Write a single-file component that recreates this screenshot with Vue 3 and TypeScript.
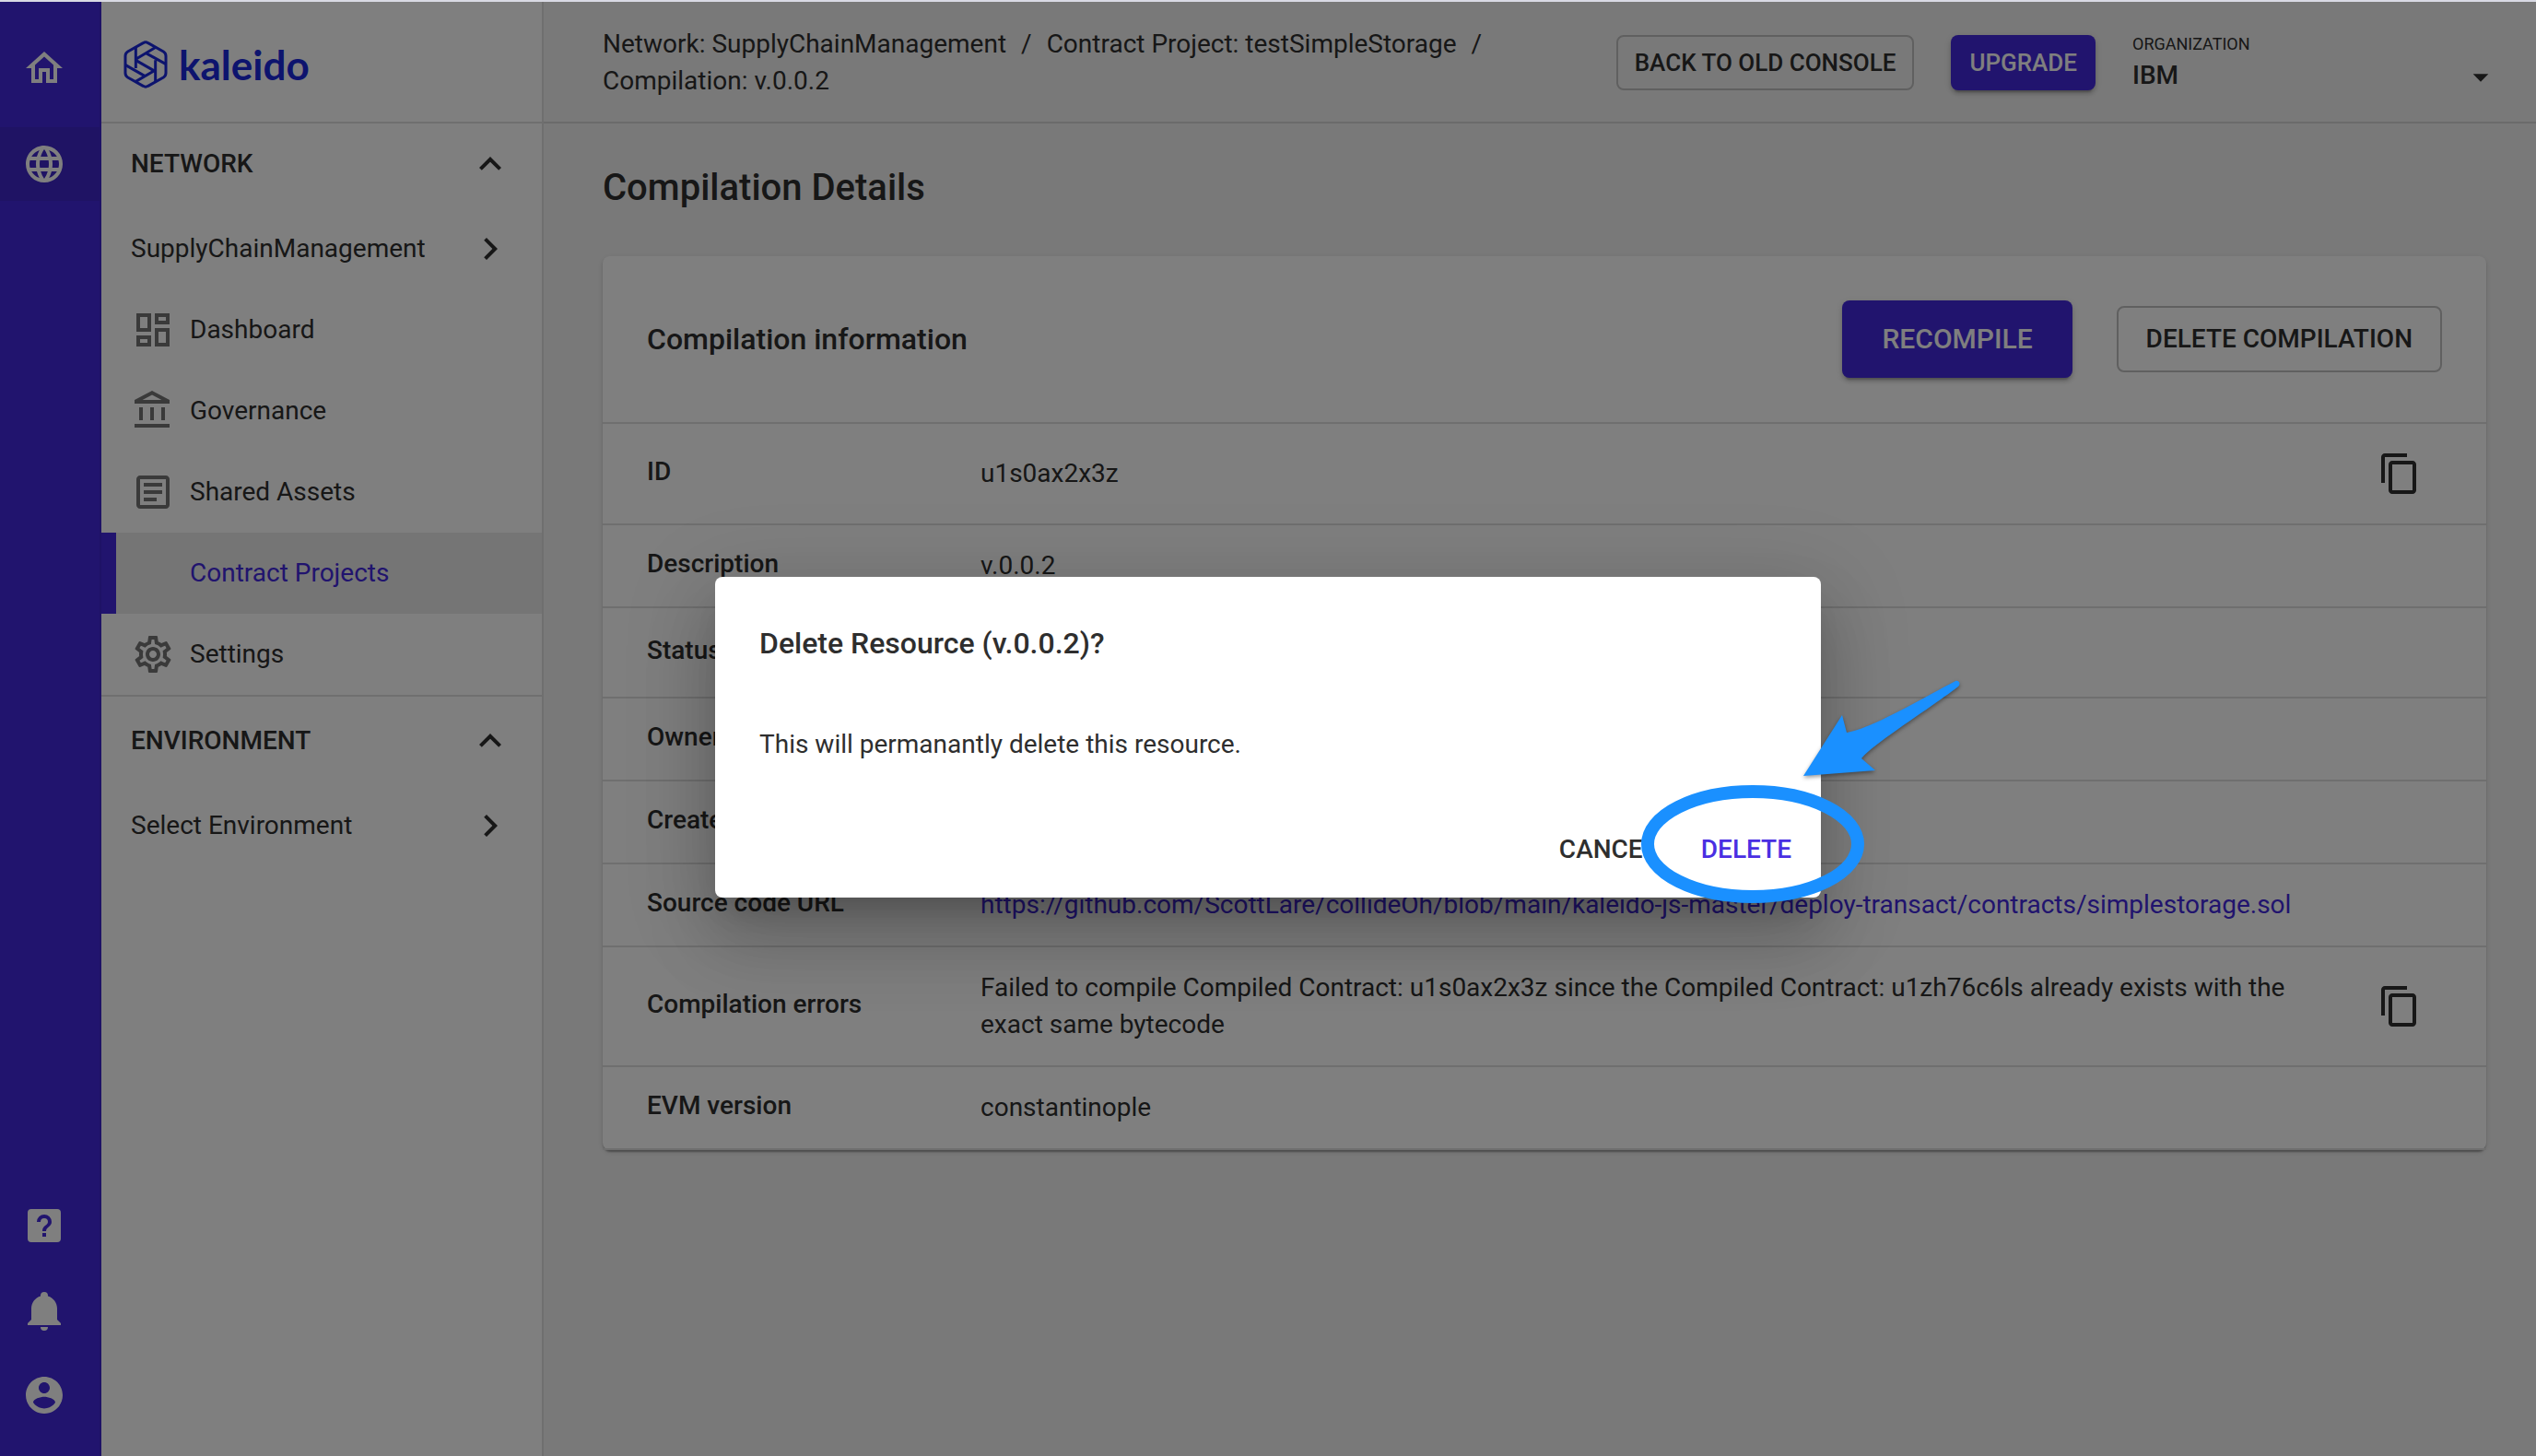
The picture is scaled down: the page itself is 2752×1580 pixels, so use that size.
<script setup lang="ts">
import { ref } from 'vue'

interface NavItem {
  label: string
  icon: string
  active?: boolean
}

interface DetailRow {
  label: string
  value: string
  copy?: boolean
  link?: boolean
  tall?: boolean
}

const icons = {
  home: 'M12 5.69L17 10.19V18H15V12H9V18H7V10.19L12 5.69M12 3L2 12H5V20H11V14H13V20H19V12H22L12 3Z',
  web: 'M16.36,14C16.44,13.34 16.5,12.68 16.5,12C16.5,11.32 16.44,10.66 16.36,10H19.74C19.9,10.64 20,11.31 20,12C20,12.69 19.9,13.36 19.74,14M14.59,19.56C15.19,18.45 15.65,17.25 15.97,16H18.92C17.96,17.65 16.43,18.93 14.59,19.56M14.34,14H9.66C9.56,13.34 9.5,12.68 9.5,12C9.5,11.32 9.56,10.65 9.66,10H14.34C14.43,10.65 14.5,11.32 14.5,12C14.5,12.68 14.43,13.34 14.34,14M12,19.96C11.17,18.76 10.5,17.43 10.09,16H13.91C13.5,17.43 12.83,18.76 12,19.96M8,8H5.08C6.03,6.34 7.57,5.06 9.4,4.44C8.8,5.55 8.35,6.75 8,8M5.08,16H8C8.35,17.25 8.8,18.45 9.4,19.56C7.57,18.93 6.03,17.65 5.08,16M4.26,14C4.1,13.36 4,12.69 4,12C4,11.31 4.1,10.64 4.26,10H7.64C7.56,10.66 7.5,11.32 7.5,12C7.5,12.68 7.56,13.34 7.64,14M12,4.03C12.83,5.23 13.5,6.57 13.91,8H10.09C10.5,6.57 11.17,5.23 12,4.03M18.92,8H15.97C15.65,6.75 15.19,5.55 14.59,4.44C16.43,5.07 17.96,6.34 18.92,8M12,2C6.47,2 2,6.5 2,12A10,10 0 0,0 12,22A10,10 0 0,0 22,12A10,10 0 0,0 12,2Z',
  help: 'M11,18H13V16H11V18M12,6A4,4 0 0,0 8,10H10A2,2 0 0,1 12,8A2,2 0 0,1 14,10C14,12 11,11.75 11,15H13C13,12.75 16,12.5 16,10A4,4 0 0,0 12,6M5,3H19A2,2 0 0,1 21,5V19A2,2 0 0,1 19,21H5A2,2 0 0,1 3,19V5A2,2 0 0,1 5,3Z',
  bell: 'M21,19V20H3V19L5,17V11C5,7.9 7.03,5.17 10,4.29C10,4.19 10,4.1 10,4A2,2 0 0,1 12,2A2,2 0 0,1 14,4C14,4.1 14,4.19 14,4.29C16.97,5.17 19,7.9 19,11V17L21,19M14,21A2,2 0 0,1 12,23A2,2 0 0,1 10,21',
  account: 'M12 2C6.48 2 2 6.48 2 12s4.48 10 10 10 10-4.48 10-10S17.52 2 12 2zm0 3c1.66 0 3 1.34 3 3s-1.34 3-3 3-3-1.34-3-3 1.34-3 3-3zm0 14.2c-2.5 0-4.71-1.28-6-3.22.03-1.99 4-3.08 6-3.08 1.99 0 5.97 1.09 6 3.08-1.29 1.94-3.5 3.22-6 3.22z',
  dashboard: 'M19 5v2h-4V5h4M9 5v6H5V5h4m10 8v6h-4v-6h4M9 17v2H5v-2h4M21 3h-8v6h8V3zM11 3H3v10h8V3zm10 8h-8v10h8V11zm-10 4H3v6h8v-6z',
  bank: 'M6.5 10h-2v7h2v-7zm6 0h-2v7h2v-7zm8.5 9H2v2h19v-2zm-2.5-9h-2v7h2v-7zm-7-6.74L16.71 6H6.29l5.21-2.74m0-2.26L2 6v2h19V6l-9.5-5z',
  article: 'M19 5v14H5V5h14m0-2H5c-1.1 0-2 .9-2 2v14c0 1.1.9 2 2 2h14c1.1 0 2-.9 2-2V5c0-1.1-.9-2-2-2z M14 17H7v-2h7v2zm3-4H7v-2h10v2zm0-4H7V7h10v2z',
  settings: 'M19.43 12.98c.04-.32.07-.64.07-.98 0-.34-.03-.66-.07-.98l2.11-1.65c.19-.15.24-.42.12-.64l-2-3.46c-.09-.16-.26-.25-.44-.25-.06 0-.12.01-.17.03l-2.49 1c-.52-.4-1.08-.73-1.69-.98l-.38-2.65C14.46 2.18 14.25 2 14 2h-4c-.25 0-.46.18-.49.42l-.38 2.65c-.61.25-1.17.59-1.69.98l-2.49-1c-.06-.02-.12-.03-.18-.03-.17 0-.34.09-.43.25l-2 3.46c-.13.22-.07.49.12.64l2.11 1.65c-.04.32-.07.65-.07.98 0 .33.03.66.07.98l-2.11 1.65c-.19.15-.24.42-.12.64l2 3.46c.09.16.26.25.44.25.06 0 .12-.01.17-.03l2.49-1c.52.4 1.08.73 1.69.98l.38 2.65c.03.24.24.42.49.42h4c.25 0 .46-.18.49-.42l.38-2.65c.61-.25 1.17-.59 1.69-.98l2.49 1c.06.02.12.03.18.03.17 0 .34-.09.43-.25l2-3.46c.12-.22.07-.49-.12-.64l-2.11-1.65zm-1.98-1.71c.04.31.05.52.05.73 0 .21-.02.43-.05.73l-.14 1.13.89.7 1.08.84-.7 1.21-1.27-.51-1.04-.42-.9.68c-.43.32-.84.56-1.25.73l-1.06.43-.16 1.13-.2 1.35h-1.4l-.19-1.35-.16-1.13-1.06-.43c-.43-.18-.83-.41-1.23-.71l-.91-.7-1.06.43-1.27.51-.7-1.21 1.08-.84.89-.7-.14-1.13c-.03-.31-.05-.54-.05-.74s.02-.43.05-.73l.14-1.13-.89-.7-1.08-.84.7-1.21 1.27.51 1.04.42.9-.68c.43-.32.84-.56 1.25-.73l1.06-.43.16-1.13.2-1.35h1.39l.19 1.35.16 1.13 1.06.43c.43.18.83.41 1.23.71l.91.7 1.06-.43 1.27-.51.7 1.21-1.07.85-.89.7.14 1.13zM12 8c-2.21 0-4 1.79-4 4s1.79 4 4 4 4-1.79 4-4-1.79-4-4-4zm0 6c-1.1 0-2-.9-2-2s.9-2 2-2 2 .9 2 2-.9 2-2 2z',
  up: 'M7.41,15.41L12,10.83L16.59,15.41L18,14L12,8L6,14L7.41,15.41Z',
  right: 'M8.59,16.58L13.17,12L8.59,7.41L10,6L16,12L10,18L8.59,16.58Z',
  copy: 'M16 1H4c-1.1 0-2 .9-2 2v14h2V3h12V1zm3 4H8c-1.1 0-2 .9-2 2v14c0 1.1.9 2 2 2h11c1.1 0 2-.9 2-2V7c0-1.1-.9-2-2-2zm0 16H8V7h11v14z',
  caret: 'M7 11l5 5 5-5z'
}

const navItems: NavItem[] = [
  { label: 'Dashboard', icon: icons.dashboard },
  { label: 'Governance', icon: icons.bank },
  { label: 'Shared Assets', icon: icons.article },
  { label: 'Contract Projects', icon: '', active: true },
  { label: 'Settings', icon: icons.settings }
]

const crumbs: string[] = [
  'Network: SupplyChainManagement',
  'Contract Project: testSimpleStorage',
  'Compilation: v.0.0.2'
]

const rows: DetailRow[] = [
  { label: 'ID', value: 'u1s0ax2x3z', copy: true },
  { label: 'Description', value: 'v.0.0.2' },
  { label: 'Status', value: '', tall: true },
  { label: 'Owner', value: '' },
  { label: 'Created', value: '' },
  {
    label: 'Source code URL',
    value: 'https://github.com/ScottLare/collideOh/blob/main/kaleido-js-master/deploy-transact/contracts/simplestorage.sol',
    link: true
  },
  {
    label: 'Compilation errors',
    value: 'Failed to compile Compiled Contract: u1s0ax2x3z since the Compiled Contract: u1zh76c6ls already exists with the exact same bytecode',
    copy: true
  },
  { label: 'EVM version', value: 'constantinople' }
]

const organization = ref('IBM')
const dialogOpen = ref(true)
</script>

<template>
  <div class="app">
    <nav class="rail" aria-label="Global">
      <a class="rail-item" href="#" aria-label="Home"><svg class="icon" viewBox="0 0 24 24"><path :d="icons.home" /></svg></a>
      <a class="rail-item current" href="#" aria-label="Networks"><svg class="icon" viewBox="0 0 24 24"><path :d="icons.web" /></svg></a>
      <div class="rail-bottom">
        <button class="rail-item" aria-label="Help"><svg class="icon" viewBox="0 0 24 24"><path :d="icons.help" /></svg></button>
        <button class="rail-item" aria-label="Notifications"><svg class="icon" viewBox="0 0 24 24"><path :d="icons.bell" /></svg></button>
        <button class="rail-item" aria-label="Account"><svg class="icon" viewBox="0 0 24 24"><path :d="icons.account" /></svg></button>
      </div>
    </nav>

    <aside class="sidebar">
      <a class="brand" href="#">
        <svg class="brand-mark" viewBox="44 23 144 162" aria-hidden="true">
          <path d="M108 34Q116 29 124 34L174 62Q182 67 182 76V132Q182 141 174 146L124 174Q116 179 108 174L58 146Q50 141 50 132V76Q50 67 58 62Z" />
          <path d="M84 49V116M84 87L149 48M117 67L181 102M148 160V90M84 90L148 127M51 106L114 142M83 160L148 122" />
        </svg>
        <span class="brand-name">kaleido</span>
      </a>
      <section class="group">
        <button class="group-head">NETWORK<svg class="icon" viewBox="0 0 24 24"><path :d="icons.up" /></svg></button>
        <a class="nav-parent" href="#">SupplyChainManagement<svg class="icon" viewBox="0 0 24 24"><path :d="icons.right" /></svg></a>
        <a v-for="item in navItems" :key="item.label" class="nav-item" :class="{ active: item.active }" href="#">
          <svg class="icon" viewBox="0 0 24 24"><path v-if="item.icon" :d="item.icon" /></svg>
          <span>{{ item.label }}</span>
        </a>
      </section>
      <section class="group">
        <button class="group-head">ENVIRONMENT<svg class="icon" viewBox="0 0 24 24"><path :d="icons.up" /></svg></button>
        <a class="nav-parent" href="#">Select Environment<svg class="icon" viewBox="0 0 24 24"><path :d="icons.right" /></svg></a>
      </section>
    </aside>

    <div class="content">
      <header class="topbar">
        <nav class="crumbs" aria-label="Breadcrumb">
          <template v-for="(crumb, i) in crumbs" :key="crumb">
            <a href="#">{{ crumb }}</a>
            <span v-if="i < crumbs.length - 1" class="slash">/</span>
          </template>
        </nav>
        <button class="btn outlined small">BACK TO OLD CONSOLE</button>
        <button class="btn filled small">UPGRADE</button>
        <div class="org">
          <label for="org">ORGANIZATION</label>
          <div class="org-field">
            <select id="org" v-model="organization">
              <option>IBM</option>
            </select>
            <svg class="icon" viewBox="0 0 24 24"><path :d="icons.caret" /></svg>
          </div>
        </div>
      </header>

      <main class="main">
        <h1>Compilation Details</h1>
        <section class="card">
          <div class="card-head">
            <h2>Compilation information</h2>
            <button class="btn filled large">RECOMPILE</button>
            <button class="btn outlined" @click="dialogOpen = true">DELETE COMPILATION</button>
          </div>
          <table class="details">
            <tbody>
              <tr v-for="row in rows" :key="row.label" :class="{ tall: row.tall }">
                <th scope="row">{{ row.label }}</th>
                <td>
                  <a v-if="row.link" :href="row.value">{{ row.value }}</a>
                  <template v-else>{{ row.value }}</template>
                </td>
                <td class="tools">
                  <button v-if="row.copy" class="copy" :aria-label="'Copy ' + row.label">
                    <svg class="icon" viewBox="0 0 24 24"><path :d="icons.copy" /></svg>
                  </button>
                </td>
              </tr>
            </tbody>
          </table>
        </section>
      </main>
    </div>

    <div v-if="dialogOpen" class="backdrop">
      <div class="dialog" role="dialog" aria-modal="true" aria-labelledby="dialog-title">
        <h2 id="dialog-title">Delete Resource (v.0.0.2)?</h2>
        <p>This will permanantly delete this resource.</p>
        <div class="dialog-actions">
          <button class="btn text" @click="dialogOpen = false">CANCEL</button>
          <button class="btn text primary" @click="dialogOpen = false">DELETE</button>
        </div>
        <svg class="callout" viewBox="0 0 360 260" aria-hidden="true">
          <ellipse cx="126" cy="186" rx="114" ry="57" />
          <path d="M181 112L223 46L228 65C252 62 312 27 346 9C350 8 352 12 349 15C318 39 254 79 244 93L259 106Z" />
        </svg>
      </div>
    </div>
  </div>
</template>

<style>
body {
  margin: 0;
}
</style>

<style scoped>
* {
  box-sizing: border-box;
}

.app {
  --primary: #4228dc;
  --ink: #2e2e2e;
  --line: #dedede;
  position: relative;
  display: flex;
  min-height: 100vh;
  border-top: 2px solid #d9dae4;
  background: #f3f3f3;
  color: var(--ink);
  font: 400 28px/40px Roboto, sans-serif;
}

a {
  color: inherit;
  text-decoration: none;
}

button,
select {
  border: 0;
  padding: 0;
  background: none;
  color: inherit;
  font: inherit;
}

h1,
h2,
p {
  margin: 0;
}

.icon {
  display: block;
  flex: none;
  width: 48px;
  height: 48px;
  fill: currentColor;
}

.rail {
  display: flex;
  flex-direction: column;
  flex: none;
  gap: 24px;
  width: 110px;
  padding: 32px 0 26px;
  border-right: 2px solid #3d25cc;
  background: var(--primary);
  color: #fff;
}

.rail-item {
  display: flex;
  align-items: center;
  width: 100%;
  height: 80px;
  padding-left: 24px;
}

.rail-item.current {
  background: #3e27c8;
}

.rail-bottom {
  display: flex;
  flex-direction: column;
  gap: 12px;
  margin-top: auto;
}

.sidebar {
  flex: none;
  width: 480px;
  border-right: 2px solid var(--line);
  background: #fff;
}

.brand {
  display: flex;
  align-items: center;
  gap: 12px;
  height: 132px;
  padding: 6px 24px 0;
  border-bottom: 2px solid var(--line);
  color: #1a28dc;
}

.brand-mark {
  width: 48px;
  height: 54px;
  fill: none;
  stroke: currentColor;
  stroke-width: 9px;
}

.brand-name {
  font: 700 44px/56px Lato, sans-serif;
}

.group + .group {
  padding-top: 4px;
  border-top: 2px solid var(--line);
}

.group-head,
.nav-parent {
  display: flex;
  align-items: center;
  justify-content: space-between;
  width: 100%;
  height: 88px;
  padding: 0 32px;
}

.group-head {
  margin-bottom: 4px;
  font-weight: 500;
}

.nav-item {
  display: flex;
  align-items: center;
  gap: 16px;
  height: 88px;
  padding-left: 32px;
}

.nav-item .icon {
  color: #757575;
}

.nav-item.active {
  padding-left: 16px;
  border-left: 16px solid var(--primary);
  background: #ebebeb;
  color: var(--primary);
}

.content {
  flex: 1;
  min-width: 0;
}

.topbar {
  display: flex;
  align-items: center;
  gap: 40px;
  height: 132px;
  padding: 2px 36px 0 64px;
  border-bottom: 2px solid #d6d6d6;
}

.crumbs {
  display: flex;
  flex: 1;
  flex-wrap: wrap;
}

.slash {
  margin: 0 16px;
}

.btn {
  flex: none;
  height: 72px;
  padding: 0 30px;
  border-radius: 8px;
  font-weight: 500;
  white-space: nowrap;
}

.btn.outlined {
  border: 2px solid #c0c0c0;
}

.btn.filled {
  background: var(--primary);
  box-shadow: 0 6px 2px -4px rgba(0, 0, 0, 0.2), 0 4px 4px rgba(0, 0, 0, 0.14), 0 2px 10px rgba(0, 0, 0, 0.12);
  color: #fff;
}

.btn.small {
  height: 60px;
  font-size: 26px;
}

.btn.small.outlined {
  padding: 0 18px;
}

.btn.small.filled {
  padding: 0 20px;
}

.btn.large {
  height: 84px;
  padding: 0 43px;
  font-size: 30px;
}

.btn.text {
  padding: 0 16px;
}

.btn.primary {
  color: #4a2fe2;
}

.org {
  display: flex;
  flex-direction: column;
  width: 402px;
}

.org label {
  font-size: 18px;
  line-height: 28px;
}

.org-field {
  display: flex;
  align-items: center;
}

.org select {
  flex: 1;
  height: 40px;
  appearance: none;
  font-weight: 500;
}

.org-field .icon {
  height: 40px;
  width: 48px;
}

.main {
  padding: 46px 54px 48px 64px;
}

h1 {
  margin-bottom: 50px;
  font-size: 40px;
  font-weight: 500;
  line-height: 48px;
}

.card {
  border-radius: 8px;
  background: #fff;
  box-shadow: 0 4px 2px -2px rgba(0, 0, 0, 0.2), 0 2px 2px rgba(0, 0, 0, 0.14), 0 2px 6px rgba(0, 0, 0, 0.12);
}

.card-head {
  display: flex;
  align-items: center;
  gap: 48px;
  padding: 48px;
}

.card-head h2 {
  flex: 1;
}

h2 {
  font-size: 32px;
  font-weight: 500;
  line-height: 48px;
}

.details {
  width: 100%;
  border-collapse: separate;
  border-spacing: 0;
  border-top: 2px solid var(--line);
}

.details th,
.details td {
  height: 90px;
  padding: 24px 0;
  border-bottom: 2px solid var(--line);
  text-align: left;
}

.details th {
  width: 410px;
  padding: 22px 0 26px 48px;
  font-weight: 500;
}

.details a {
  color: var(--primary);
}

.details .tall th {
  height: 98px;
}

.details .tools {
  width: 190px;
  padding: 0 70px 0 0;
}

.copy {
  display: block;
  margin-left: auto;
  padding: 30px 0;
}

.backdrop {
  position: absolute;
  inset: 0;
  display: flex;
  align-items: center;
  justify-content: center;
  padding-top: 18px;
  background: rgba(0, 0, 0, 0.5);
}

.dialog {
  position: relative;
  width: 1200px;
  border-radius: 8px;
  background: #fff;
  box-shadow: 0 22px 30px -14px rgba(0, 0, 0, 0.2), 0 48px 76px 6px rgba(0, 0, 0, 0.14), 0 18px 92px 16px rgba(0, 0, 0, 0.12);
}

.dialog h2 {
  padding: 48px 48px 0;
}

.dialog p {
  padding: 66px 48px 42px;
}

.dialog-actions {
  display: flex;
  justify-content: flex-end;
  gap: 16px;
  padding: 16px;
}

.callout {
  position: absolute;
  right: -160px;
  bottom: -16px;
  width: 360px;
  height: 260px;
  pointer-events: none;
}

.callout ellipse {
  fill: none;
  stroke: #1a90ff;
  stroke-width: 14px;
}

.callout path {
  fill: #1a90ff;
  filter: drop-shadow(0 2px 2px rgba(0, 0, 0, 0.4));
}
</style>
